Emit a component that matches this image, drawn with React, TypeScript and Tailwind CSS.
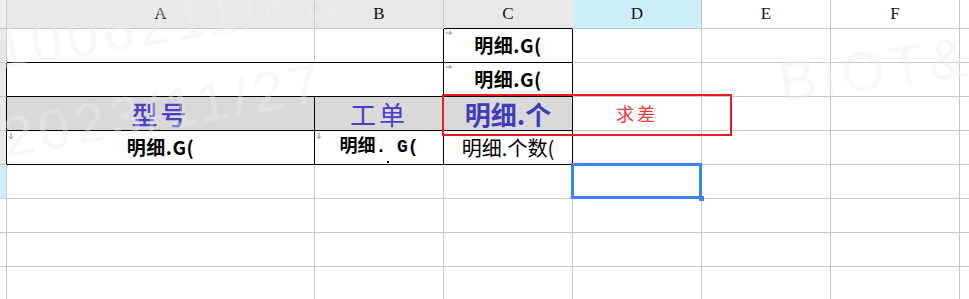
import React from "react";

const CJK = "font-['Noto_Sans_CJK_SC','Noto_Sans',sans-serif]";

// border colour helpers (grid vs. black cell borders)
const gR = "border-r-[#c8c8c8]";
const kR = "border-r-black";
const gB = "border-b-[#c8c8c8]";
const kB = "border-b-black";

const W = {
  hdr: "w-[7px]",
  a: "w-[308px]",
  ab: "w-[437px]",
  col: "w-[129px]",
  g: "w-[10px]",
};

type CellProps = {
  w: string;
  br: string;
  bb: string;
  bg?: string;
  children?: React.ReactNode;
  className?: string;
};

function Cell({ w, br, bb, bg = "bg-white", children, className = "" }: CellProps) {
  return (
    <div
      className={`relative flex shrink-0 items-center justify-center border-r border-b ${w} ${br} ${bb} ${bg} ${className}`}
    >
      {children}
    </div>
  );
}

function RightMark() {
  return (
    <svg className="absolute left-[1px] top-[1px]" width="8" height="6" viewBox="0 0 8 6">
      <path d="M0.5 3 H6.5 M4.5 1 L6.5 3 L4.5 5" stroke="#8a8a8a" strokeWidth="1" fill="none" />
    </svg>
  );
}

function DownMark() {
  return (
    <svg className="absolute left-[1px] top-[1px]" width="6" height="8" viewBox="0 0 6 8">
      <path d="M3 0.5 V6.5 M1 4.5 L3 6.5 L5 4.5" stroke="#8a8a8a" strokeWidth="1" fill="none" />
    </svg>
  );
}

function Row({ children, h = "h-[34px]" }: { children: React.ReactNode; h?: string }) {
  return <div className={`flex ${h}`}>{children}</div>;
}

function Tail({ hdrBg = "bg-white" }: { hdrBg?: string }) {
  return (
    <>
      <Cell w={W.col} br={gR} bb={gB} bg={hdrBg} />
      <Cell w={W.col} br={gR} bb={gB} />
      <Cell w={W.col} br={gR} bb={gB} />
      <Cell w={W.g} br={gR} bb={gB} />
    </>
  );
}

const boldG = `${CJK} text-[19px] font-bold text-black tracking-[0.5px]`;

export default function App() {
  const colHead = "font-['Liberation_Serif',serif] text-[17px] text-[#111]";
  return (
    <div className="relative h-[299px] w-[969px] overflow-hidden bg-white">
      {/* column headers */}
      <Row h="h-[29px]">
        <Cell w={W.hdr} br={gR} bb={gB} bg="bg-[#eeeef2]" />
        <Cell w={W.a} br={gR} bb={gB} bg="bg-[#e8e8e8]">
          <span className={colHead}>A</span>
        </Cell>
        <Cell w={W.col} br={gR} bb={gB} bg="bg-[#e8e8e8]">
          <span className={colHead}>B</span>
        </Cell>
        <Cell w={W.col} br="border-r-[#e8e8e8]" bb={kB} bg="bg-[#e8e8e8]">
          <span className={colHead}>C</span>
        </Cell>
        <Cell w={W.col} br={gR} bb={gB} bg="bg-[#cdeefa]">
          <span className={colHead}>D</span>
        </Cell>
        <Cell w={W.col} br={gR} bb={gB}>
          <span className={colHead}>E</span>
        </Cell>
        <Cell w={W.col} br={gR} bb={gB}>
          <span className={colHead}>F</span>
        </Cell>
        <Cell w={W.g} br={gR} bb={gB} />
      </Row>

      {/* row 1 */}
      <Row>
        <Cell w={W.hdr} br={gR} bb={gB} bg="bg-[#e8e8e8]" />
        <Cell w={W.a} br={gR} bb={kB} />
        <Cell w={W.col} br={kR} bb={kB} />
        <Cell w={W.col} br={kR} bb={kB}>
          <RightMark />
          <span className={boldG}>明细.G(</span>
        </Cell>
        <Tail />
      </Row>

      {/* row 2 */}
      <Row>
        <Cell w={W.hdr} br={kR} bb={gB} bg="bg-[#e8e8e8]" />
        <Cell w={W.ab} br={kR} bb={kB} />
        <Cell w={W.col} br={kR} bb={kB}>
          <RightMark />
          <span className={boldG}>明细.G(</span>
        </Cell>
        <Tail />
      </Row>

      {/* row 3 */}
      <Row>
        <Cell w={W.hdr} br={kR} bb={gB} bg="bg-[#e8e8e8]" />
        <Cell w={W.a} br={kR} bb={kB} bg="bg-[#d9d9d9]">
          <span className={`${CJK} text-[26px] font-medium tracking-[3px] text-[#4a40c4]`}>型号</span>
        </Cell>
        <Cell w={W.col} br={kR} bb={kB} bg="bg-[#d9d9d9]">
          <span className={`${CJK} text-[26px] tracking-[3px] text-[#4a40c4]`}>工单</span>
        </Cell>
        <Cell w={W.col} br={kR} bb={kB} bg="bg-[#d9d9d9]">
          <span className={`${CJK} text-[26px] font-bold text-[#3f3db8]`}>明细.个</span>
        </Cell>
        <Cell w={W.col} br={gR} bb={gB}>
          <span className={`${CJK} text-[18px] tracking-[3px] text-[#e8393d]`}>求差</span>
        </Cell>
        <Cell w={W.col} br={gR} bb={gB} />
        <Cell w={W.col} br={gR} bb={gB} />
        <Cell w={W.g} br={gR} bb={gB} />
      </Row>

      {/* row 4 */}
      <Row>
        <Cell w={W.hdr} br={kR} bb={gB} bg="bg-[#e8e8e8]" />
        <Cell w={W.a} br={kR} bb={kB}>
          <DownMark />
          <span className={boldG}>明细.G(</span>
        </Cell>
        <Cell w={W.col} br={kR} bb={kB}>
          <DownMark />
          <span className={`font-['Liberation_Mono','Noto_Sans_CJK_SC',monospace] text-[18px] font-bold text-black`}>
            明细. G(
          </span>
          <span className="absolute bottom-[1px] right-[54px] h-[2px] w-[2px] bg-black" />
        </Cell>
        <Cell w={W.col} br={kR} bb={kB}>
          <span className={`${CJK} text-[20px] text-black`}>明细.个数(</span>
        </Cell>
        <Tail />
      </Row>

      {/* row 5 (active row) */}
      <Row>
        <Cell w={W.hdr} br={gR} bb={gB} bg="bg-[#cdeefa]" />
        <Cell w={W.a} br={gR} bb={gB} />
        <Cell w={W.col} br={gR} bb={gB} />
        <Cell w={W.col} br={gR} bb={gB} />
        <Tail />
      </Row>

      {[6, 7, 8].map((r) => (
        <Row key={r}>
          <Cell w={W.hdr} br={gR} bb={gB} />
          <Cell w={W.a} br={gR} bb={gB} />
          <Cell w={W.col} br={gR} bb={gB} />
          <Cell w={W.col} br={gR} bb={gB} />
          <Tail />
        </Row>
      ))}

      {/* watermark */}
      <div className="pointer-events-none absolute inset-0 font-['Liberation_Sans',sans-serif] text-[56px] leading-none tracking-[5px] text-[rgba(236,236,236,0.38)]">
        <span className="absolute left-[0px] top-[22px] origin-bottom-left -rotate-[9deg] whitespace-nowrap">1006211/&&-</span>
        <span className="absolute left-[8px] top-[110px] origin-bottom-left -rotate-[10deg] whitespace-nowrap">2023/11/27</span>
        <span className="absolute left-[783px] top-[55px] origin-bottom-left -rotate-[8deg] whitespace-nowrap">BIOT&&</span>
      </div>

      {/* red highlight box */}
      <div className="pointer-events-none absolute left-[442px] top-[94px] h-[42px] w-[290px] border-2 border-[#e81c24]" />

      {/* selected cell D5 */}
      <div className="pointer-events-none absolute left-[571px] top-[163px] h-[36px] w-[131px] border-[3px] border-[#3a86ee]" />
      <div className="pointer-events-none absolute left-[699px] top-[196px] h-[5px] w-[5px] bg-[#3a86ee]" />
    </div>
  );
}
